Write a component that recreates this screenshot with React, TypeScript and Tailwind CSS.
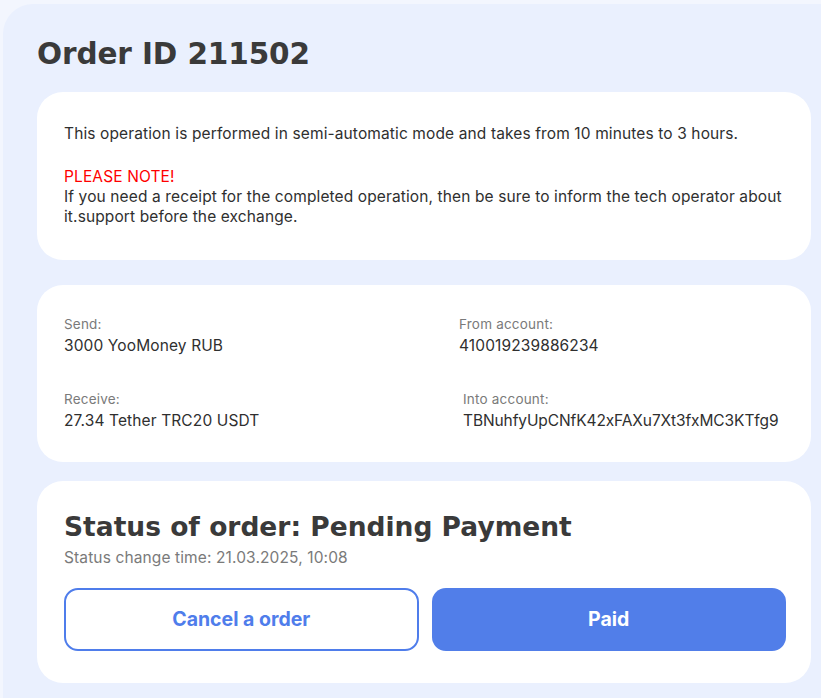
import React from 'react';

const heading = { fontFamily: '"DejaVu Sans", sans-serif' };
const body = { fontFamily: 'Inter, "Noto Sans", sans-serif' };

const Field = ({ label, value, className = '' }: { label: string; value: string; className?: string }) => (
  <div className={className}>
    <div className="text-[13.5px] leading-[18px] tracking-[0.2px] text-[#7a7a7a]">{label}</div>
    <div className="mt-[3px] text-[15.5px] leading-[20px] tracking-[0.12px] text-[#2f2f2f]">{value}</div>
  </div>
);

export default function App() {
  return (
    <div className="min-h-screen bg-[#f3f6fe] pl-[3px] pt-[4px]" style={body}>
      <div className="min-h-[694px] rounded-tl-[30px] bg-[#eaf0fe] pl-[34px] pr-[10px] pb-[14px]">
        <h1
          className="pt-[30px] pb-[18px] text-[29.5px] leading-[40px] font-bold tracking-[-0.1px] text-[#3a3a3a]"
          style={heading}
        >
          Order ID 211502
        </h1>

        <div className="rounded-[26px] bg-white px-[27px] pt-[32px] pb-[33px] text-[15.5px] leading-[20px] tracking-[0.12px] text-[#2f2f2f]">
          <p>This operation is performed in semi-automatic mode and takes from 10 minutes to 3 hours.</p>
          <p className="mt-[23px] text-[#ff0000]">PLEASE NOTE!</p>
          <p>
            If you need a receipt for the completed operation, then be sure to inform the tech operator about
            it.support before the exchange.
          </p>
        </div>

        <div className="mt-[25px] grid grid-cols-[395px_1fr] gap-y-[34px] rounded-[26px] bg-white px-[27px] pt-[30px] pb-[31px]">
          <Field label="Send:" value="3000 YooMoney RUB" />
          <Field label="From account:" value="410019239886234" />
          <Field label="Receive:" value="27.34 Tether TRC20 USDT" />
          <Field
            label="Into account:"
            value="TBNuhfyUpCNfK42xFAXu7Xt3fxMC3KTfg9"
            className="pl-[4px] [&>div:last-child]:tracking-[-0.1px]"
          />
        </div>

        <div className="mt-[19px] rounded-[26px] bg-white pl-[27px] pr-[25px] pt-[29px] pb-[32px]">
          <h2 className="text-[26.5px] leading-[34px] font-bold text-[#3a3a3a]" style={heading}>
            Status of order: Pending Payment
          </h2>
          <div className="mt-[4px] text-[15.5px] leading-[20px] tracking-[0.12px] text-[#7a7a7a]">
            Status change time: 21.03.2025, 10:08
          </div>
          <div className="mt-[20px] grid grid-cols-2 gap-[13px]">
            <button className="h-[63px] rounded-[14px] border-2 border-[#4f7deb] bg-white text-[19.5px] font-bold text-[#4f7deb]">
              Cancel a order
            </button>
            <button className="h-[63px] rounded-[14px] bg-[#517ee9] text-[19.5px] font-bold text-white">
              Paid
            </button>
          </div>
        </div>
      </div>
    </div>
  );
}
